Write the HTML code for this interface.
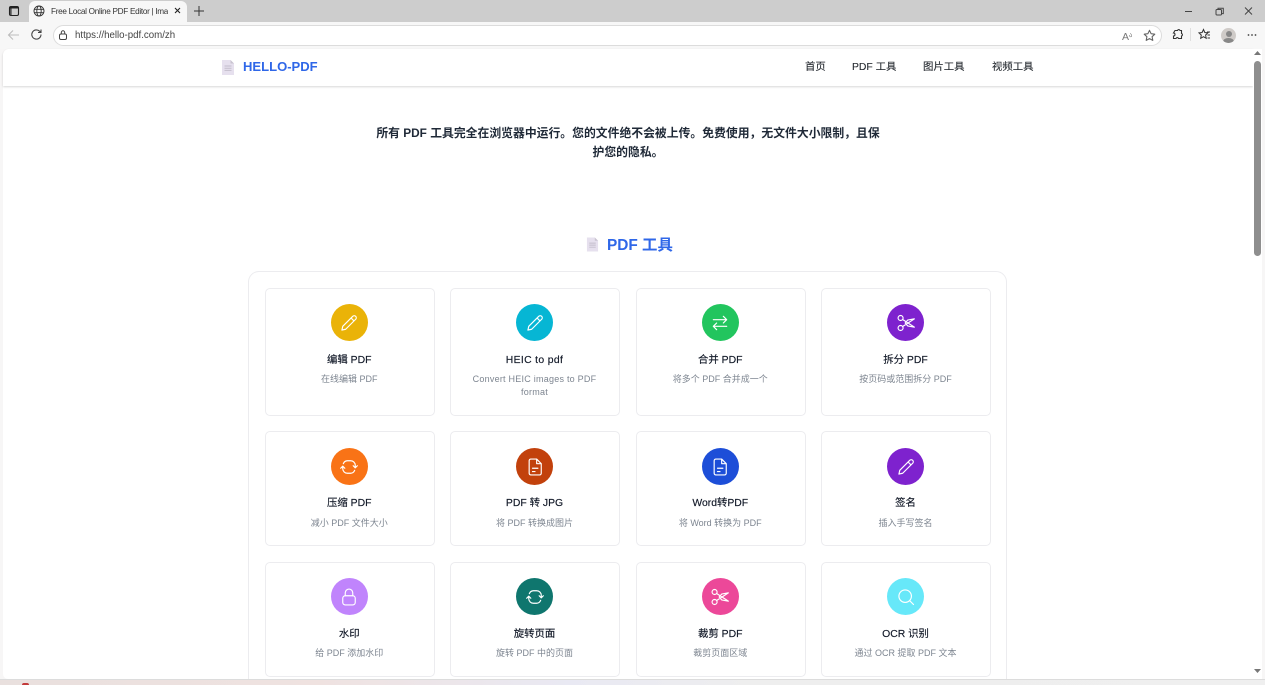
<!DOCTYPE html>
<html lang="zh">
<head>
<meta charset="utf-8">
<title>HELLO-PDF</title>
<style>
*{box-sizing:border-box;margin:0;padding:0}
html,body{width:1265px;height:685px;overflow:hidden;background:#f7f6f6;font-family:"Liberation Sans","Noto Sans CJK SC",sans-serif}
#root{position:absolute;left:0;top:0;width:1265px;height:685px;overflow:hidden;background:#f7f6f6}
.a{position:absolute}
svg{display:block}
#tabbar{left:0;top:0;width:1265px;height:22px;background:#cdcdcd}
#tab{left:29px;top:1px;width:158px;height:22px;background:#f7f7f7;border-radius:6px 6px 0 0}
#tabtext{left:51px;top:5px;width:117px;height:13px;overflow:hidden;white-space:nowrap;font-size:8.2px;letter-spacing:-.3px;line-height:13px;color:#333}
#toolbar{left:0;top:22px;width:1265px;height:27px;background:#f7f7f7}
#addr{left:53px;top:25px;width:1109px;height:21px;background:#fff;border:1px solid #dcdcdc;border-radius:11px}
#url{left:75px;top:29px;font-size:9.7px;line-height:13px;color:#444}
#page{left:3px;top:49px;width:1259px;height:630px;background:#fff;border-radius:6px 6px 5px 5px;overflow:hidden}
#clip{left:0;top:0;width:1265px;height:679px;overflow:hidden}
#head{left:3px;top:49px;width:1250px;height:37px;background:#fff;box-shadow:0 1px 2px rgba(0,0,0,.16);border-radius:6px 0 0 0}
#logo{left:243px;top:58px;font-size:13.05px;line-height:18px;font-weight:700;color:#2f67e8;white-space:nowrap}
.nav{top:60px;font-size:10.4px;line-height:15px;color:#24292f;white-space:nowrap;font-weight:400;-webkit-text-stroke:.1px #24292f}
#hero{left:300px;top:124px;width:656px;text-align:center;font-size:11.83px;line-height:19px;font-weight:700;color:#1f2937}
#h2{left:607px;top:236px;font-size:15.4px;line-height:20px;font-weight:700;color:#2f67e8;white-space:nowrap}
#box{left:248px;top:271px;width:759px;height:440px;border:1px solid #ececef;border-radius:11px;background:#fff}
#bottom{left:0;top:679px;width:1265px;height:6px;background:linear-gradient(90deg,#e9e0de 0,#efe2e0 25%,#e9e9f3 45%,#eeeeee 60%,#efefef 100%);border-top:1px solid #dcdcdc}
.card{position:absolute;background:#fff;border:1px solid #ececef;border-radius:5px}
.c{position:absolute;left:50%;top:15px;width:37px;height:37px;margin-left:-19px;border-radius:50%}
.c svg{position:absolute;left:8.5px;top:8.5px}
.t{position:absolute;left:0;right:0;top:64px;text-align:center;font-size:10.4px;line-height:14px;font-weight:400;color:#111827;white-space:nowrap;-webkit-text-stroke:.15px #111827;margin-left:-1px}
.s{position:absolute;left:0;right:0;top:84px;text-align:center;font-size:9px;line-height:13px;color:#7d8590;margin-left:-1px;white-space:nowrap}
.r1{top:288px;height:128px}.r2{top:431px;height:115px}.r3{top:562px;height:115px}
.r1 .t,.r3 .t{top:64.500px}
.r2 .c{top:16px}
.r2 .t{top:65px}
.r2 .s{top:85px}
.x1{left:265px;width:169.5px}.x2{left:450px;width:170px}.x3{left:636px;width:169.5px}.x4{left:821px;width:170px}
.i{fill:none;stroke:#fff;stroke-width:1.4;stroke-linecap:round;stroke-linejoin:round}
#sb{left:1253px;top:49px;width:9px;height:630px;background:#fff}
#thumb{left:1254px;top:61px;width:7px;height:195px;background:#8e8e8e;border-radius:4px}
.ic{fill:none;stroke:#666;stroke-width:1.1;stroke-linecap:round;stroke-linejoin:round}
</style>
</head>
<body>
<div id="root">
<div class="a" id="tabbar"></div>
<div class="a" id="tab"></div>
<svg class="a" style="left:8px;top:5px" width="12" height="12" viewBox="0 0 12 12"><rect x="1.5" y="1.5" width="9" height="9" rx="1.5" fill="none" stroke="#222" stroke-width="1.1"/><rect x="1.5" y="1.5" width="9" height="2" fill="#222"/><rect x="1.5" y="1.5" width="2.2" height="9" fill="#222" opacity=".7"/></svg>
<svg class="a" style="left:33px;top:5px" width="12" height="12" viewBox="0 0 12 12"><g fill="none" stroke="#333" stroke-width=".9"><circle cx="6" cy="6" r="5"/><ellipse cx="6" cy="6" rx="2.2" ry="5"/><path d="M1.2 4.3h9.6M1.2 7.7h9.6"/></g></svg>
<div class="a" id="tabtext">Free Local Online PDF Editor | Image</div>
<svg class="a" style="left:173px;top:6px" width="9" height="9" viewBox="0 0 9 9"><path d="M2 2l5 5M7 2l-5 5" stroke="#222" stroke-width="1.1" fill="none"/></svg>
<svg class="a" style="left:193px;top:5px" width="12" height="12" viewBox="0 0 12 12"><path d="M6 1v10M1 6h10" stroke="#333" stroke-width="1" fill="none"/></svg>
<svg class="a" style="left:1184px;top:6px" width="70" height="11" viewBox="0 0 70 11"><g fill="none" stroke="#444" stroke-width="1"><path d="M1 5.5h7"/><rect x="32" y="3.5" width="5.5" height="5.5" rx="1"/><path d="M34 3.5v-1.2h5.3v5.3h-1.8"/><path d="M61 1.5l7 7M68 1.5l-7 7"/></g></svg>
<div class="a" id="toolbar"></div>
<svg class="a" style="left:7px;top:29px" width="13" height="12" viewBox="0 0 13 12"><path d="M1.5 6h10.5M6 1.5L1.5 6 6 10.5" fill="none" stroke="#bdbdbd" stroke-width="1.1"/></svg>
<svg class="a" style="left:30px;top:28px" width="13" height="13" viewBox="0 0 13 13"><path d="M11 6.5a4.6 4.6 0 1 1-1.4-3.3L11 4.500M11 1.500v3H8" fill="none" stroke="#444" stroke-width="1.1"/></svg>
<div class="a" id="addr"></div>
<svg class="a" style="left:57px;top:29px" width="12" height="12" viewBox="0 0 12 12"><rect x="2.5" y="5" width="7" height="5.5" rx="1.5" fill="none" stroke="#444"/><path d="M4.3 5V3.500a1.700 1.700 0 0 1 3.400 0V5" fill="none" stroke="#444"/></svg>
<div class="a" id="url">https://hello-pdf.com/zh</div>
<div class="a" style="left:1122px;top:29px;font-size:10.5px;line-height:13px;color:#777">A<span style="font-size:6.5px;vertical-align:3px">ა</span></div>
<svg class="a" style="left:1143px;top:29px" width="13" height="13" viewBox="0 0 13 13"><path class="ic" d="M6.500 1.300l1.600 3.400 3.700.5-2.700 2.500.7 3.700-3.300-1.800-3.300 1.800.7-3.700L1.200 5.200l3.700-.5z"/></svg>
<svg class="a" style="left:1171px;top:28px" width="13" height="13" viewBox="0 0 13 13"><path d="M4 2.500h2.500a1.300 1.300 0 0 1 2.500 0h1.500v3a1.300 1.300 0 0 1 0 2.500v2.500H7.500a1.300 1.300 0 0 0-2.500 0H2.500V8a1.300 1.300 0 0 0 0-3z" fill="none" stroke="#333" stroke-width="1.1"/></svg>
<div class="a" style="left:1190px;top:28px;width:1px;height:13px;background:#dfdfdf"></div>
<svg class="a" style="left:1198px;top:28px" width="13" height="13" viewBox="0 0 13 13"><path d="M5.500 1.500l1.300 3 3 .4-2.200 2.200.6 3.200-2.700-1.600-2.800 1.600.6-3.200L1 4.900l3.100-.4z" fill="none" stroke="#333" stroke-width="1"/><path d="M9 4h3M9.500 7H12M9.500 10H12" stroke="#333" stroke-width="1"/></svg>
<div class="a" style="left:1221px;top:28px;width:15px;height:15px;border-radius:50%;background:#cfcbc8;overflow:hidden"><div class="a" style="left:4.500px;top:2.500px;width:6px;height:6px;border-radius:50%;background:#888"></div><div class="a" style="left:2px;top:9.500px;width:11px;height:7px;border-radius:50%;background:#888"></div></div>
<svg class="a" style="left:1247px;top:33px" width="10" height="4" viewBox="0 0 10 4"><g fill="#444"><circle cx="1.500" cy="2" r=".9"/><circle cx="5" cy="2" r=".9"/><circle cx="8.500" cy="2" r=".9"/></g></svg>

<div class="a" id="page"></div>
<div class="a" id="clip"><div class="a" id="box"></div></div>
<div class="a" id="bottom"></div>
<div class="a" style="left:22px;top:683px;width:7px;height:2px;background:#c23a3a;border-radius:3px 3px 0 0"></div>

<div class="a" id="head"></div>
<svg class="a" style="left:221px;top:60px" width="14" height="15" viewBox="0 0 14 15"><path d="M1 0h8.500L13 3.500V15H1z" fill="#e6e0ee"/><path d="M9.500 0L13 3.500H9.500z" fill="#c9c4d0"/><path d="M3.500 6h7M3.500 8.200h7M3.500 10.400h7" stroke="#c3bdcc" stroke-width="1"/></svg>
<div class="a" id="logo">HELLO-PDF</div>
<div class="a nav" style="left:805px">首页</div>
<div class="a nav" style="left:852px">PDF 工具</div>
<div class="a nav" style="left:923px">图片工具</div>
<div class="a nav" style="left:992px">视频工具</div>

<div class="a" id="hero">所有 PDF 工具完全在浏览器中运行。您的文件绝不会被上传。免费使用，无文件大小限制，且保<br>护您的隐私。</div>

<svg class="a" style="left:586px;top:237px" width="13" height="15" viewBox="0 0 14 15"><path d="M1 0h8.500L13 3.500V15H1z" fill="#e6e0ee"/><path d="M9.500 0L13 3.500H9.500z" fill="#c9c4d0"/><path d="M3.500 6h7M3.500 8.200h7M3.500 10.400h7" stroke="#c3bdcc" stroke-width="1"/></svg>
<div class="a" id="h2">PDF 工具</div>

<div class="card x1 r1"><div class="c" style="background:#eab308"><svg class="i" width="20" height="20" viewBox="0 0 24 24"><path d="M3.500 20.500L4.500 16 16.500 4a2.400 2.400 0 0 1 3.500 3.500L8 19.500zM14.500 6L18 9.500"/></svg></div><div class="t">编辑 PDF</div><div class="s">在线编辑 PDF</div></div>
<div class="card x2 r1"><div class="c" style="background:#06b6d4"><svg class="i" width="20" height="20" viewBox="0 0 24 24"><path d="M3.500 20.500L4.500 16 16.500 4a2.400 2.400 0 0 1 3.500 3.500L8 19.500zM14.500 6L18 9.500"/></svg></div><div class="t" style="letter-spacing:.35px">HEIC to pdf</div><div class="s" style="letter-spacing:.24px">Convert HEIC images to PDF<br>format</div></div>
<div class="card x3 r1"><div class="c" style="background:#22c55e"><svg class="i" width="20" height="20" viewBox="0 0 24 24"><path d="M4 8h16m0 0l-4-4m4 4l-4 4M20 16H4m0 0l4 4m-4-4l4-4"/></svg></div><div class="t">合并 PDF</div><div class="s">将多个 PDF 合并成一个</div></div>
<div class="card x4 r1"><div class="c" style="background:#7e22ce"><svg class="i" width="20" height="20" viewBox="0 0 24 24"><circle cx="5.500" cy="6" r="3"/><circle cx="5.500" cy="18" r="3"/><path d="M8 7.800L22 17 14 15.500 11 12M8 16.200L22 7 14 8.500 11 12"/></svg></div><div class="t">拆分 PDF</div><div class="s">按页码或范围拆分 PDF</div></div>

<div class="card x1 r2"><div class="c" style="background:#f97316"><svg class="i" width="20" height="20" viewBox="0 0 24 24"><path d="M5.200 8A5.500 5.500 0 0 1 10 4.500h4a5.500 5.500 0 0 1 5.500 5.500v3M17 10.500l2.500 2.500 2.500-2.500M18.800 16A5.500 5.500 0 0 1 14 19.500h-4a5.500 5.500 0 0 1-5.500-5.500v-3M7 13.500L4.500 11 2 13.500"/></svg></div><div class="t">压缩 PDF</div><div class="s">减小 PDF 文件大小</div></div>
<div class="card x2 r2"><div class="c" style="background:#c2410c"><svg class="i" width="20" height="20" viewBox="0 0 24 24"><path d="M7 2.500h7l5.500 5.500v11.500a2 2 0 0 1-2 2H7a2 2 0 0 1-2-2v-15a2 2 0 0 1 2-2zM14 2.500V8h5.500M9 13.500h6.500M9 17.500h3"/></svg></div><div class="t">PDF 转 JPG</div><div class="s">将 PDF 转换成图片</div></div>
<div class="card x3 r2"><div class="c" style="background:#1d4ed8"><svg class="i" width="20" height="20" viewBox="0 0 24 24"><path d="M7 2.500h7l5.500 5.500v11.500a2 2 0 0 1-2 2H7a2 2 0 0 1-2-2v-15a2 2 0 0 1 2-2zM14 2.500V8h5.500M9 13.500h6.500M9 17.500h3"/></svg></div><div class="t">Word转PDF</div><div class="s">将 Word 转换为 PDF</div></div>
<div class="card x4 r2"><div class="c" style="background:#7e22ce"><svg class="i" width="20" height="20" viewBox="0 0 24 24"><path d="M3.500 20.500L4.500 16 16.500 4a2.400 2.400 0 0 1 3.500 3.500L8 19.500zM14.500 6L18 9.500"/></svg></div><div class="t">签名</div><div class="s">插入手写签名</div></div>

<div class="card x1 r3"><div class="c" style="background:#c084fc"><svg class="i" width="20" height="20" viewBox="0 0 24 24"><rect x="4.500" y="10.500" width="15" height="11" rx="3"/><path d="M7.500 10.500V7a4.500 4.500 0 0 1 9 0v3.500"/></svg></div><div class="t">水印</div><div class="s">给 PDF 添加水印</div></div>
<div class="card x2 r3"><div class="c" style="background:#0f766e"><svg class="i" width="20" height="20" viewBox="0 0 24 24"><path d="M5.200 8A5.500 5.500 0 0 1 10 4.500h4a5.500 5.500 0 0 1 5.500 5.500v3M17 10.500l2.500 2.500 2.500-2.500M18.800 16A5.500 5.500 0 0 1 14 19.500h-4a5.500 5.500 0 0 1-5.500-5.500v-3M7 13.500L4.500 11 2 13.500"/></svg></div><div class="t">旋转页面</div><div class="s">旋转 PDF 中的页面</div></div>
<div class="card x3 r3"><div class="c" style="background:#ec4899"><svg class="i" width="20" height="20" viewBox="0 0 24 24"><circle cx="5.500" cy="6" r="3"/><circle cx="5.500" cy="18" r="3"/><path d="M8 7.800L22 17 14 15.500 11 12M8 16.200L22 7 14 8.500 11 12"/></svg></div><div class="t">裁剪 PDF</div><div class="s">裁剪页面区域</div></div>
<div class="card x4 r3"><div class="c" style="background:#67e8f9"><svg class="i" width="20" height="20" viewBox="0 0 24 24"><circle cx="11" cy="11" r="7.500"/><path d="M16.500 16.500L21 21"/></svg></div><div class="t">OCR 识别</div><div class="s">通过 OCR 提取 PDF 文本</div></div>

<div class="a" id="sb"></div>
<div class="a" id="thumb"></div>
<svg class="a" style="left:1254px;top:50px" width="7" height="6" viewBox="0 0 7 6"><path d="M3.500 1L7 5H0z" fill="#777"/></svg>
<svg class="a" style="left:1254px;top:668px" width="7" height="6" viewBox="0 0 7 6"><path d="M0 1h7L3.500 5z" fill="#777"/></svg>
</div>
</body>
</html>
